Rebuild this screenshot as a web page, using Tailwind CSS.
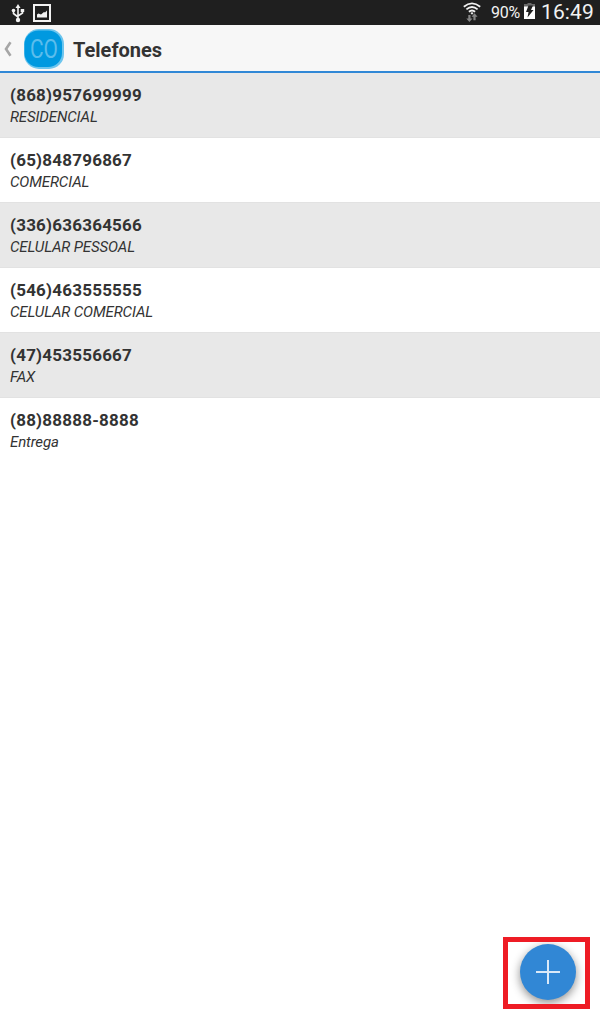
<!DOCTYPE html>
<html lang="pt">
  <head>
    <meta charset="UTF-8" />
    <title>Telefones</title>
    <script src="https://cdn.jsdelivr.net/npm/@tailwindcss/browser@4"></script>
  </head>
  <body class="bg-white h-screen flex flex-col overflow-hidden font-[Roboto,sans-serif] text-[#333333]">
    <!-- barra de status -->
    <div class="h-[25px] shrink-0 bg-[#1f1f1f] text-[#f2f2f2] flex items-center pl-[11px] pr-[6px]">
      <svg class="w-[14px] h-[20px]" viewBox="0 0 14 20" fill="none" stroke="#f2f2f2" stroke-width="1.6">
        <path d="M7 3v14M2.500 8v2.500L7 14M11.500 8v2L7 13" />
        <path d="M7 1l2.500 4H4.500z" fill="#f2f2f2" stroke="none" />
        <circle cx="2.500" cy="7.500" r="1.800" fill="#f2f2f2" stroke="none" />
        <path d="M9.700 6h3.500v3H9.700z" fill="#f2f2f2" stroke="none" />
        <circle cx="7" cy="17" r="2.200" fill="#f2f2f2" stroke="none" />
      </svg>
      <svg class="w-[18px] h-[18px] ml-[8px]" viewBox="0 0 18 18">
        <path d="M1 1h16v16H1z" fill="none" stroke="#f2f2f2" stroke-width="2" />
        <path d="M4 13.500v-3l1.500-1 2.500 1 3-2.500 1 .5 2-2v7z" fill="#f2f2f2" />
      </svg>
      <svg class="w-[18px] h-[20px] ml-auto mb-[1px]" viewBox="0 0 18 20" fill="none" stroke="#f2f2f2" stroke-width="1.8">
        <path d="M.8 4.800Q9-2 17.200 4.800M3.400 7.400Q9 2.600 14.600 7.400M5.900 9.800Q9 7.200 12.100 9.800" />
        <path d="M7.500 11Q9 9.600 10.500 11L9 12.800z" fill="#f2f2f2" stroke="none" />
        <path d="M5.300 13h2.200v3.500H9.500L6.400 20 3.300 16.500h2zM10.400 18.300h2.200v-3.500h2L11.500 11.300 8.500 14.800h1.900z" fill="#858585" stroke="none" />
      </svg>
      <span class="ml-[10px] w-[30px] text-[16px] leading-[25px] tracking-[-0.200px] whitespace-nowrap">90%</span>
      <svg class="w-[11px] h-[16px] ml-[3px] mb-[3px]" viewBox="0 0 11 16">
        <path d="M3.500 0h4v1H11v4H0V1h3.500z" fill="#696969" />
        <path d="M0 3.500h11V16H0z" fill="#fff" />
        <path d="M4.500 2.500H9L7 7h2.500L3.500 14.500l1-5.500H2z" fill="#1f1f1f" />
      </svg>
      <span class="ml-[6px] mb-[2px] w-[53px] text-[21px] leading-[24px] tracking-[0.100px] whitespace-nowrap">16:49</span>
    </div>

    <header class="h-[48px] shrink-0 bg-[#f7f7f7] border-b-2 border-[#3188d6] flex items-center pl-[4px]">
      <svg class="w-[8px] h-[16px] mt-[2px]" viewBox="0 0 8 16" fill="none" stroke="#a6a6a6" stroke-width="2.6">
        <path d="M6.500 1.300L2 8l4.500 6.700" />
      </svg>
      <svg class="w-[40px] h-[40px] ml-[12px] mt-[2px]" viewBox="0 0 40 40">
        <rect x="0" y="0" width="40" height="40" rx="15" fill="#6cc5ee" />
        <rect x="0.500" y="1.500" width="37.500" height="36.500" rx="14" fill="#0099e0" />
        <text x="6" y="28.800" font-family="Roboto" font-size="25" font-weight="400" fill="#5cbdec" textLength="28" lengthAdjust="spacingAndGlyphs">CO</text>
      </svg>
      <h1 class="ml-[9px] mt-[4px] text-[20px] font-bold">Telefones</h1>
    </header>

    <ul>
      <li class="h-[65px] px-[10px] pt-[11px] bg-[#e8e8e8] border-b border-[#e2e2e2]">
        <p class="text-[17px] leading-[22px] font-bold tracking-[0.220px]">(868)957699999</p>
        <p class="text-[15px] leading-[22px] italic tracking-[-0.120px]">RESIDENCIAL</p>
      </li>
      <li class="h-[65px] px-[10px] pt-[11px] border-b border-[#e2e2e2]">
        <p class="text-[17px] leading-[22px] font-bold tracking-[0.220px]">(65)848796867</p>
        <p class="text-[15px] leading-[22px] italic tracking-[-0.120px]">COMERCIAL</p>
      </li>
      <li class="h-[65px] px-[10px] pt-[11px] bg-[#e8e8e8] border-b border-[#e2e2e2]">
        <p class="text-[17px] leading-[22px] font-bold tracking-[0.220px]">(336)636364566</p>
        <p class="text-[15px] leading-[22px] italic tracking-[-0.120px]">CELULAR PESSOAL</p>
      </li>
      <li class="h-[65px] px-[10px] pt-[11px] border-b border-[#e2e2e2]">
        <p class="text-[17px] leading-[22px] font-bold tracking-[0.220px]">(546)463555555</p>
        <p class="text-[15px] leading-[22px] italic tracking-[-0.120px]">CELULAR COMERCIAL</p>
      </li>
      <li class="h-[65px] px-[10px] pt-[11px] bg-[#e8e8e8] border-b border-[#e2e2e2]">
        <p class="text-[17px] leading-[22px] font-bold tracking-[0.220px]">(47)453556667</p>
        <p class="text-[15px] leading-[22px] italic tracking-[-0.120px]">FAX</p>
      </li>
      <li class="h-[65px] px-[10px] pt-[11px]">
        <p class="text-[17px] leading-[22px] font-bold tracking-[0.220px]">(88)88888-8888</p>
        <p class="text-[15px] leading-[22px] italic tracking-[-0.120px]">Entrega</p>
      </li>
    </ul>

    <!-- botão flutuante com destaque -->
    <div class="absolute left-[503px] top-[937px] w-[87px] h-[72px] border-5 border-[#ee1c25] overflow-hidden pl-[12px] pt-[2px]">
      <button class="block w-[56px] h-[56px] rounded-full bg-[#3187d5] shadow-[0_3px_10px_rgba(0,0,0,0.45)]" aria-label="Adicionar">
        <svg class="w-[56px] h-[56px]" viewBox="0 0 56 56" fill="none" stroke="#d9e9f8" stroke-width="2">
          <path d="M28 16v24M16 28h24" />
        </svg>
      </button>
    </div>
  </body>
</html>
